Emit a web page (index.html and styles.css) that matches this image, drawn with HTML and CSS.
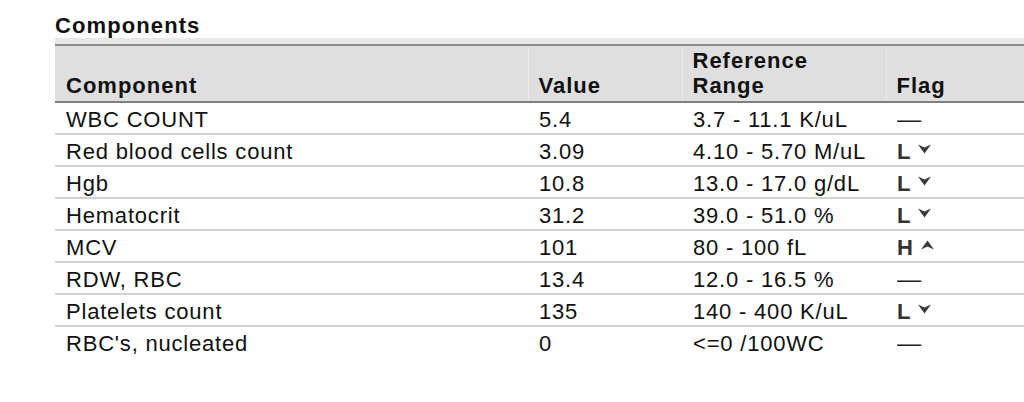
FILE: index.html
```html
<!DOCTYPE html>
<html lang="en">
<head>
<meta charset="utf-8">
<title>Components</title>
<link rel="stylesheet" href="styles.css">
</head>
<body>
<div class="page">
  <h2 class="title">Components</h2>
  <div class="band"></div>
  <table class="results">
    <colgroup>
      <col class="c-name"><col class="c-value"><col class="c-range"><col class="c-flag">
    </colgroup>
    <thead>
      <tr>
        <th>Component</th>
        <th>Value</th>
        <th>Reference<br>Range</th>
        <th>Flag</th>
      </tr>
    </thead>
    <tbody>
      <tr><td>WBC COUNT</td><td>5.4</td><td>3.7 - 11.1 K/uL</td><td><span class="dash">—</span></td></tr>
      <tr><td>Red blood cells count</td><td>3.09</td><td>4.10 - 5.70 M/uL</td><td><span class="flag">L<svg class="arrow" viewBox="0 0 13 10" width="13" height="10"><path d="M0 0.5 L6.5 3.5 L13 0.5 L6.5 9.5 Z"/></svg></span></td></tr>
      <tr><td>Hgb</td><td>10.8</td><td>13.0 - 17.0 g/dL</td><td><span class="flag">L<svg class="arrow" viewBox="0 0 13 10" width="13" height="10"><path d="M0 0.5 L6.5 3.5 L13 0.5 L6.5 9.5 Z"/></svg></span></td></tr>
      <tr><td>Hematocrit</td><td>31.2</td><td>39.0 - 51.0 %</td><td><span class="flag">L<svg class="arrow" viewBox="0 0 13 10" width="13" height="10"><path d="M0 0.5 L6.5 3.5 L13 0.5 L6.5 9.5 Z"/></svg></span></td></tr>
      <tr><td>MCV</td><td>101</td><td>80 - 100 fL</td><td><span class="flag">H<svg class="arrow" viewBox="0 0 13 10" width="13" height="10"><path d="M0 9.5 L6.5 6.5 L13 9.5 L6.5 0.5 Z"/></svg></span></td></tr>
      <tr><td>RDW, RBC</td><td>13.4</td><td>12.0 - 16.5 %</td><td><span class="dash">—</span></td></tr>
      <tr><td>Platelets count</td><td>135</td><td>140 - 400 K/uL</td><td><span class="flag">L<svg class="arrow" viewBox="0 0 13 10" width="13" height="10"><path d="M0 0.5 L6.5 3.5 L13 0.5 L6.5 9.5 Z"/></svg></span></td></tr>
      <tr><td>RBC's, nucleated</td><td>0</td><td>&lt;=0 /100WC</td><td><span class="dash">—</span></td></tr>
    </tbody>
  </table>
</div>
</body>
</html>
```

FILE: styles.css
```css
html, body {
  margin: 0;
  padding: 0;
  background: #fff;
}

.page {
  padding-left: 55px;
  font-family: "Liberation Sans", Arial, sans-serif;
  color: #111;
}

.title {
  margin: 13px 0 0;
  font-size: 22px;
  line-height: 25px;
  font-weight: bold;
  letter-spacing: 1.1px;
  color: #111;
}

.band {
  margin-top: 0;
  height: 6px;
  width: 969px;
  background: #e8e8e8;
}

.results {
  width: 969px;
  border-collapse: collapse;
  table-layout: fixed;
  font-size: 22px;
  letter-spacing: 0.8px;
}

.c-name { width: 473px; }
.c-value { width: 154px; }
.c-range { width: 204px; }
.c-flag { width: auto; }

.results thead th {
  background: #dfdfdf;
  border-top: 2px solid #8c8c8c;
  border-bottom: 2px solid #7f7f7f;
  height: 57px;
  padding: 0 0 3px 11px;
  text-align: left;
  vertical-align: bottom;
  font-weight: bold;
  line-height: 25px;
  letter-spacing: 1px;
  box-sizing: border-box;
}

.results thead th + th {
  border-left: 1px solid #ebebeb;
  padding-left: 10px;
}

.results tbody td {
  height: 30px;
  padding: 3px 0 0 11px;
  line-height: 27px;
  vertical-align: top;
  border-bottom: 2px solid #d2d2d2;
  white-space: nowrap;
  box-sizing: border-box;
}

.results tbody tr:last-child td {
  border-bottom: none;
}

.flag {
  display: inline-flex;
  align-items: flex-start;
  font-weight: bold;
  color: #333;
  letter-spacing: 0;
}

.arrow {
  margin: 6px 0 0 8px;
  fill: #3a3a3a;
}

.dash {
  color: #222;
  letter-spacing: 0;
  display: inline-block;
  transform: scaleX(1.1);
  transform-origin: left center;
}
```
